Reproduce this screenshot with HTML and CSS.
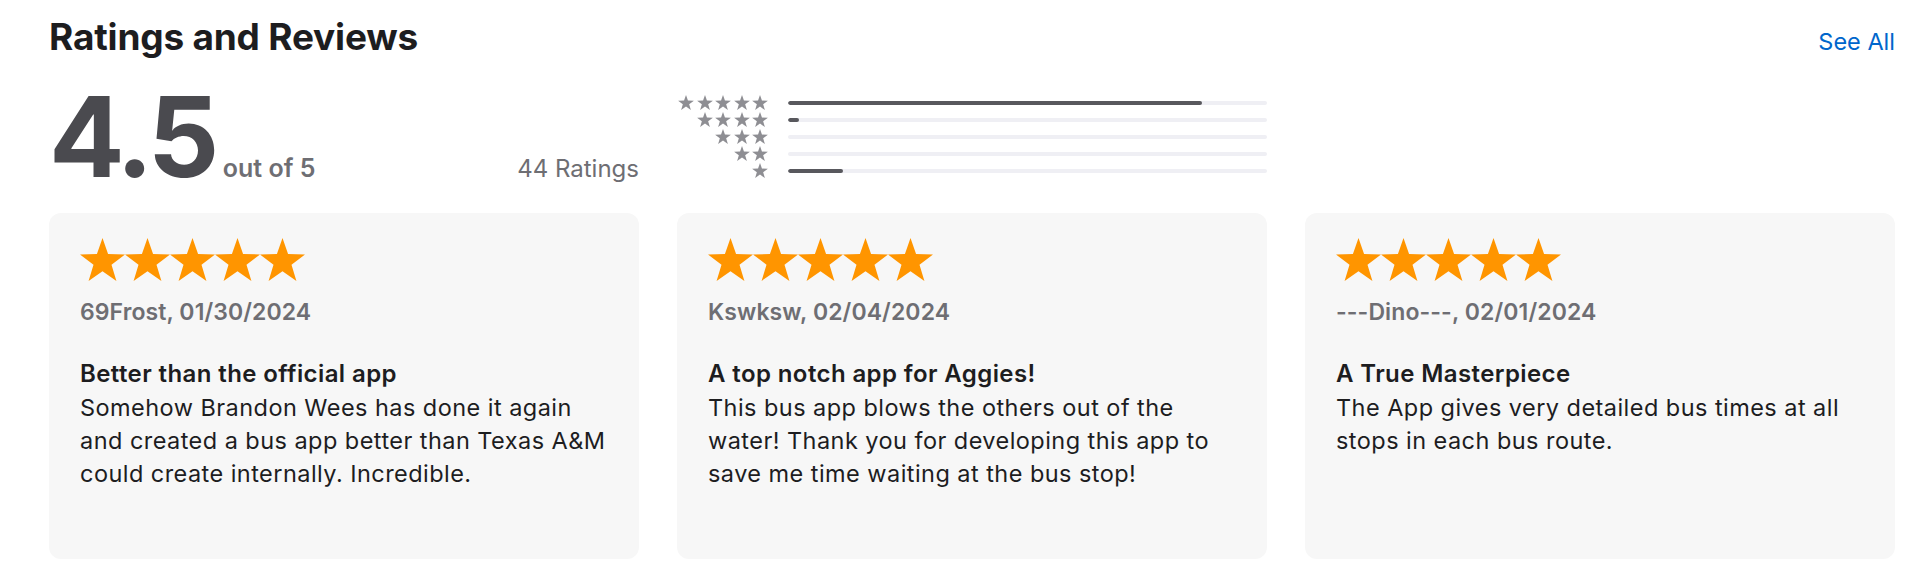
FILE: index.html
```html
<!DOCTYPE html>
<html lang="en">
<head>
  <meta charset="UTF-8">
  <title>Ratings and Reviews</title>
  <link rel="stylesheet" href="styles.css">
</head>
<body>
  <svg class="defs" aria-hidden="true">
    <symbol id="star" viewBox="2.45 0 95.1 90.5">
      <polygon points="50,0 61.76,33.82 97.55,34.55 69.02,56.18 79.39,90.45 50,70 20.61,90.45 30.98,56.18 2.45,34.55 38.24,33.82"/>
    </symbol>
  </svg>

  <div class="page">
    <header class="section-header">
      <h2 class="section-title">Ratings and Reviews</h2>
      <a class="see-all" href="#">See All</a>
    </header>

    <div class="summary">
      <div class="average">
        <div class="score">
          <span class="score-value">4.5</span>
          <span class="score-max">out of 5</span>
        </div>
        <div class="count">44 Ratings</div>
      </div>

      <div class="histogram">
        <div class="hist-row">
          <div class="hist-stars">
            <svg class="hist-star"><use href="#star"/></svg>
            <svg class="hist-star"><use href="#star"/></svg>
            <svg class="hist-star"><use href="#star"/></svg>
            <svg class="hist-star"><use href="#star"/></svg>
            <svg class="hist-star"><use href="#star"/></svg>
          </div>
          <div class="hist-bar"><div class="hist-fill" style="width: 86.4%"></div></div>
        </div>
        <div class="hist-row">
          <div class="hist-stars">
            <svg class="hist-star"><use href="#star"/></svg>
            <svg class="hist-star"><use href="#star"/></svg>
            <svg class="hist-star"><use href="#star"/></svg>
            <svg class="hist-star"><use href="#star"/></svg>
          </div>
          <div class="hist-bar"><div class="hist-fill" style="width: 2.3%"></div></div>
        </div>
        <div class="hist-row">
          <div class="hist-stars">
            <svg class="hist-star"><use href="#star"/></svg>
            <svg class="hist-star"><use href="#star"/></svg>
            <svg class="hist-star"><use href="#star"/></svg>
          </div>
          <div class="hist-bar"><div class="hist-fill" style="width: 0%"></div></div>
        </div>
        <div class="hist-row">
          <div class="hist-stars">
            <svg class="hist-star"><use href="#star"/></svg>
            <svg class="hist-star"><use href="#star"/></svg>
          </div>
          <div class="hist-bar"><div class="hist-fill" style="width: 0%"></div></div>
        </div>
        <div class="hist-row">
          <div class="hist-stars">
            <svg class="hist-star"><use href="#star"/></svg>
          </div>
          <div class="hist-bar"><div class="hist-fill" style="width: 11.4%"></div></div>
        </div>
      </div>
    </div>

    <div class="reviews">
      <article class="review">
        <div class="review-stars">
          <svg class="review-star"><use href="#star"/></svg>
          <svg class="review-star"><use href="#star"/></svg>
          <svg class="review-star"><use href="#star"/></svg>
          <svg class="review-star"><use href="#star"/></svg>
          <svg class="review-star"><use href="#star"/></svg>
        </div>
        <div class="review-author">69Frost, 01/30/2024</div>
        <h3 class="review-title">Better than the official app</h3>
        <p class="review-body">Somehow Brandon Wees has done it again and created a bus app better than Texas A&amp;M could create internally. Incredible.</p>
      </article>

      <article class="review">
        <div class="review-stars">
          <svg class="review-star"><use href="#star"/></svg>
          <svg class="review-star"><use href="#star"/></svg>
          <svg class="review-star"><use href="#star"/></svg>
          <svg class="review-star"><use href="#star"/></svg>
          <svg class="review-star"><use href="#star"/></svg>
        </div>
        <div class="review-author">Kswksw, 02/04/2024</div>
        <h3 class="review-title">A top notch app for Aggies!</h3>
        <p class="review-body">This bus app blows the others out of the water! Thank you for developing this app to save me time waiting at the bus stop!</p>
      </article>

      <article class="review">
        <div class="review-stars">
          <svg class="review-star"><use href="#star"/></svg>
          <svg class="review-star"><use href="#star"/></svg>
          <svg class="review-star"><use href="#star"/></svg>
          <svg class="review-star"><use href="#star"/></svg>
          <svg class="review-star"><use href="#star"/></svg>
        </div>
        <div class="review-author">---Dino---, 02/01/2024</div>
        <h3 class="review-title">A True Masterpiece</h3>
        <p class="review-body">The App gives very detailed bus times at all stops in each bus route.</p>
      </article>
    </div>
  </div>
</body>
</html>
```

FILE: styles.css
```css
:root {
  --text: #1d1d1f;
  --text-muted: #6e6e73;
  --score: #4a4a4f;
  --link: #0066cc;
  --star: #ff9500;
  --star-grey: #8e8e93;
  --card: #f7f7f7;
  --track: #efeff4;
  --fill: #58585d;
}

* {
  box-sizing: border-box;
}

body {
  margin: 0;
  font-family: Inter, "Noto Sans", sans-serif;
  color: var(--text);
  background: #fff;
}

.defs {
  display: none;
}

.page {
  padding: 15px 25px 0 49px;
}

.section-header {
  display: flex;
  justify-content: space-between;
  align-items: baseline;
}

.section-title {
  margin: 0;
  font-size: 37px;
  line-height: 44px;
  font-weight: 700;
  letter-spacing: -0.2px;
}

.see-all {
  font-size: 23.5px;
  color: var(--link);
  text-decoration: none;
}

.summary {
  display: grid;
  grid-template-columns: repeat(3, 1fr);
  column-gap: 38px;
  margin-top: 21px;
}

.average {
  display: flex;
  justify-content: space-between;
  align-items: baseline;
}

.score-value {
  font-size: 112px;
  line-height: 112px;
  font-weight: 700;
  letter-spacing: -5px;
  color: var(--score);
}

.score-max {
  margin-left: 4px;
  font-size: 25px;
  font-weight: 600;
  color: var(--text-muted);
}

.count {
  font-size: 24px;
  color: var(--text-muted);
}

.histogram {
  padding-top: 14px;
}

.hist-row {
  display: grid;
  grid-template-columns: 91px 1fr;
  column-gap: 20px;
  align-items: center;
  height: 17px;
}

.hist-stars {
  display: flex;
  justify-content: flex-end;
  gap: 2.5px;
}

.hist-star {
  width: 16px;
  height: 15px;
  fill: var(--star-grey);
}

.hist-bar {
  height: 4px;
  border-radius: 2px;
  background: var(--track);
  overflow: hidden;
}

.hist-fill {
  height: 100%;
  border-radius: 2px;
  background: var(--fill);
}

.reviews {
  display: grid;
  grid-template-columns: repeat(3, 1fr);
  column-gap: 38px;
  margin-top: 21px;
}

.review {
  height: 346px;
  padding: 25px 27px 25px 31px;
  border-radius: 12px;
  background: var(--card);
}

.review-stars {
  display: flex;
  height: 43px;
}

.review-star {
  width: 45px;
  height: 43px;
  fill: var(--star);
}

.review-author {
  margin-top: 15px;
  font-size: 23px;
  line-height: 33px;
  font-weight: 600;
  letter-spacing: 0.1px;
  color: var(--text-muted);
}

.review-title {
  margin: 28px 0 0;
  font-size: 24px;
  line-height: 33px;
  font-weight: 600;
  letter-spacing: 0.4px;
}

.review-body {
  margin: 1px 0 0;
  font-size: 23.5px;
  line-height: 33px;
  letter-spacing: 0.45px;
}
```
